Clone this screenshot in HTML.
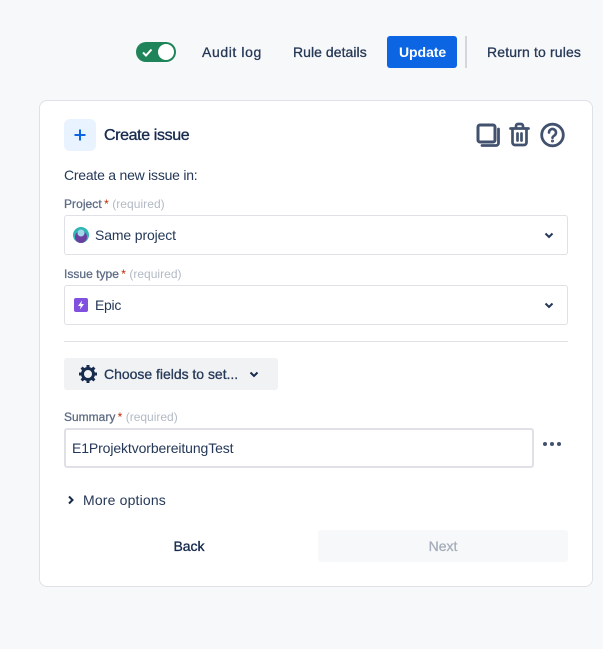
<!DOCTYPE html>
<html><head><meta charset="utf-8"><style>
html,body{margin:0;padding:0}
body{width:603px;height:649px;background:#f7f8f9;position:relative;overflow:hidden;font-family:"Liberation Sans",sans-serif;color:#172b4d;font-size:14px}
.a{position:absolute;white-space:nowrap}
.t{line-height:20px}
.m{font-weight:400;color:#253858;-webkit-text-stroke:.3px #253858}
.l{font-size:12px;line-height:16px;color:#5e6c84;-webkit-text-stroke:.3px #5e6c84}
.l i{font-style:normal;color:#bf2600;-webkit-text-stroke:0;margin-left:-1px}
.l b{font-weight:400;color:#b3bac5;-webkit-text-stroke:0}
.sel{position:absolute;left:64px;width:502px;height:38px;background:#fff;border:1px solid #dfe1e6;border-radius:3px}
</style></head><body>
<div class="a" style="left:136px;top:42px;width:40px;height:20px;border-radius:10px;background:#1f845a"></div>
<svg class="a" style="left:136px;top:42px" width="40" height="20"><path d="M7 10.500l3 3 5.500-6" fill="none" stroke="#fff" stroke-width="2"/><circle cx="30" cy="10" r="8" fill="#fff"/></svg>
<div class="a t m" style="left:202px;top:42px;letter-spacing:.6px">Audit log</div>
<div class="a t m" style="left:293px;top:42px;letter-spacing:.05px">Rule details</div>
<div class="a" style="left:387px;top:36px;width:70px;height:32px;background:#0c66e4;border-radius:3px"></div>
<div class="a t" style="left:399px;top:42px;color:#fff;font-weight:700;font-size:14px;letter-spacing:-.05px">Update</div>
<div class="a" style="left:465px;top:36px;width:2px;height:32px;background:#d3d6dc"></div>
<div class="a t m" style="left:487px;top:42px;letter-spacing:.15px">Return to rules</div>

<div class="a" style="left:39px;top:100px;width:552px;height:485px;background:#fff;border:1px solid #dfe1e6;border-radius:8px"></div>

<div class="a" style="left:64px;top:119px;width:32px;height:32px;background:#e9f2ff;border-radius:6px"></div>
<svg class="a" style="left:64px;top:119px" width="32" height="32"><path d="M16 10.500v11M10.500 16h11" stroke="#0c66e4" stroke-width="2" fill="none"/></svg>
<div class="a" style="left:104px;top:125px;font-size:16px;line-height:22px;-webkit-text-stroke:.35px #172b4d;letter-spacing:-.38px">Create issue</div>

<svg class="a" style="left:474px;top:121px" width="94" height="28" fill="none" stroke="#42526e" stroke-linecap="round" stroke-linejoin="round">
<rect x="4" y="4" width="17" height="17" rx="2" stroke-width="3"/>
<path d="M24.500 8v14a2.500 2.500 0 0 1-2.500 2.500H8" stroke-width="2.800"/>
<path d="M36.500 7.500h18M42 7V5a2 2 0 0 1 2-2h3a2 2 0 0 1 2 2v2M38.500 8v13.500a2.500 2.500 0 0 0 2.500 2.500h9a2.500 2.500 0 0 0 2.500-2.500V8M43.500 12.500v7M47.500 12.500v7" stroke-width="2.700"/>
<circle cx="78.500" cy="14" r="10.800" stroke-width="2.800"/>
<path d="M75 11.500a3.500 3.500 0 1 1 5.500 2.900c-1.300.9-2 1.500-2 2.300" stroke-width="2.600"/>
<circle cx="78.500" cy="20" r=".6" stroke-width="1.800"/>
</svg>

<div class="a t" style="left:64px;top:165px;letter-spacing:-.23px;color:#253858">Create a new issue in:</div>

<div class="a l" style="left:64px;top:196px;letter-spacing:.05px">Project<i> *</i> <b>(required)</b></div>
<div class="sel" style="top:215px"></div>
<svg class="a" style="left:72px;top:226px" width="18" height="18"><circle cx="9" cy="9" r="8" fill="#2fb5b5"/><circle cx="9" cy="11" r="6" fill="#6b3fa0"/><circle cx="9" cy="7" r="3.500" fill="#9fd8ea"/></svg>
<div class="a t" style="left:95px;top:225px;letter-spacing:-.13px;color:#253858">Same project</div>
<svg class="a" style="left:542px;top:229px" width="14" height="12"><path d="M3.500 4.500L7 8l3.500-3.500" fill="none" stroke="#253858" stroke-width="2"/></svg>

<div class="a l" style="left:64px;top:266px;letter-spacing:.02px">Issue type<i> *</i> <b>(required)</b></div>
<div class="sel" style="top:285px"></div>
<svg class="a" style="left:74px;top:298px" width="14" height="14"><rect width="14" height="14" rx="2" fill="#8250df"/><path d="M8 2.500L4 8h2.700L6 11.500 10 6H7.300z" fill="#fff"/></svg>
<div class="a t" style="left:95px;top:295px;letter-spacing:-.3px;color:#253858">Epic</div>
<svg class="a" style="left:542px;top:299px" width="14" height="12"><path d="M3.500 4.500L7 8l3.500-3.500" fill="none" stroke="#253858" stroke-width="2"/></svg>

<div class="a" style="left:64px;top:341px;width:504px;height:1px;background:#dfe1e6"></div>

<div class="a" style="left:64px;top:358px;width:214px;height:32px;background:#f1f2f4;border-radius:3px"></div>
<svg class="a" style="left:78px;top:364px" width="20" height="20" fill="none" stroke="#172b4d"><circle cx="10" cy="10" r="5.500" stroke-width="3"/><path d="M10 1v3M10 16v3M1 10h3M16 10h3M3.600 3.600l2.100 2.100M14.300 14.300l2.100 2.100M3.600 16.400l2.100-2.100M14.300 5.700l2.100-2.100" stroke-width="3"/></svg>
<div class="a t" style="left:104px;top:364px;-webkit-text-stroke:.3px #253858;color:#253858;letter-spacing:-.02px">Choose fields to set...</div>
<svg class="a" style="left:247px;top:368px" width="14" height="12"><path d="M3.500 4.500L7 8l3.500-3.500" fill="none" stroke="#172b4d" stroke-width="2"/></svg>

<div class="a l" style="left:64px;top:409px">Summary<i> *</i> <b>(required)</b></div>
<div class="a" style="left:64px;top:428px;width:466px;height:36px;background:#fff;border:2px solid #dfe1e6;border-radius:3px"></div>
<div class="a t" style="left:72px;top:438px;letter-spacing:-.11px;color:#253858">E1ProjektvorbereitungTest</div>
<svg class="a" style="left:541px;top:438px" width="22" height="12" fill="#42526e"><circle cx="4" cy="6" r="2"/><circle cx="11" cy="6" r="2"/><circle cx="18" cy="6" r="2"/></svg>

<svg class="a" style="left:66px;top:494px" width="10" height="12"><path d="M3 2.500L6.500 6 3 9.500" fill="none" stroke="#172b4d" stroke-width="2"/></svg>
<div class="a t" style="left:83px;top:490px;letter-spacing:.17px;color:#253858">More options</div>

<div class="a t" style="left:64px;top:536px;width:250px;text-align:center;color:#172b4d;-webkit-text-stroke:.35px #172b4d">Back</div>
<div class="a" style="left:318px;top:530px;width:250px;height:32px;background:#f7f8f9;border-radius:3px"></div>
<div class="a t" style="left:318px;top:536px;width:250px;text-align:center;color:#a5adba;-webkit-text-stroke:.3px #a5adba">Next</div>
</body></html>
